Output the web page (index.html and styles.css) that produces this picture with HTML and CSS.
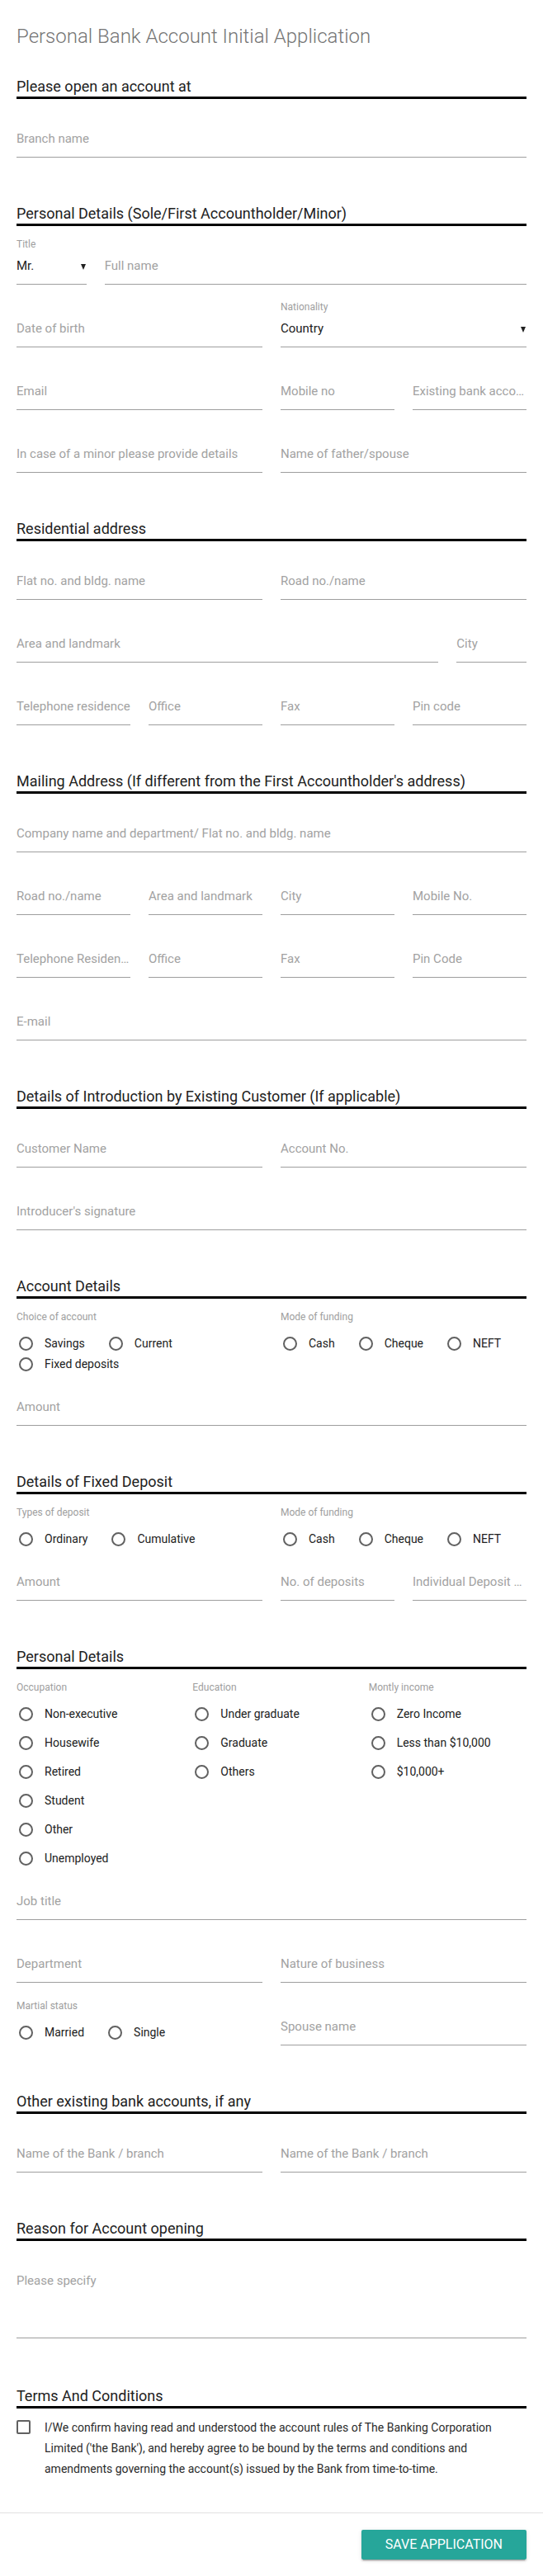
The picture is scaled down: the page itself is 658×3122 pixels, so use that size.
FILE: index.html
```html
<!DOCTYPE html>
<html lang="en">
<head>
<meta charset="utf-8">
<title>Personal Bank Account Initial Application</title>
<link rel="stylesheet" href="styles.css">
</head>
<body>
<main class="card">
  <div class="content">
    <h1 class="page-title">Personal Bank Account Initial Application</h1>

    <section class="section first">
      <h2 class="section-title">Please open an account at</h2>
      <div class="rows">
        <div class="row">
          <div class="field c12"><div class="input"><span class="ph">Branch name</span></div></div>
        </div>
      </div>
    </section>

    <section class="section">
      <h2 class="section-title">Personal Details (Sole/First Accountholder/Minor)</h2>
      <div class="rows">
        <div class="row">
          <div class="field c2">
            <span class="flabel">Title</span>
            <div class="input select"><span class="val">Mr.</span><span class="arrow"></span></div>
          </div>
          <div class="field c10"><div class="input"><span class="ph">Full name</span></div></div>
        </div>
        <div class="row">
          <div class="field c6"><div class="input"><span class="ph">Date of birth</span></div></div>
          <div class="field c6">
            <span class="flabel">Nationality</span>
            <div class="input select"><span class="val">Country</span><span class="arrow"></span></div>
          </div>
        </div>
        <div class="row">
          <div class="field c6"><div class="input"><span class="ph">Email</span></div></div>
          <div class="field c3"><div class="input"><span class="ph">Mobile no</span></div></div>
          <div class="field c3"><div class="input"><span class="ph trunc">Existing bank account no.</span></div></div>
        </div>
        <div class="row">
          <div class="field c6"><div class="input"><span class="ph">In case of a minor please provide details</span></div></div>
          <div class="field c6"><div class="input"><span class="ph">Name of father/spouse</span></div></div>
        </div>
      </div>
    </section>

    <section class="section">
      <h2 class="section-title">Residential address</h2>
      <div class="rows">
        <div class="row">
          <div class="field c6"><div class="input"><span class="ph">Flat no. and bldg. name</span></div></div>
          <div class="field c6"><div class="input"><span class="ph">Road no./name</span></div></div>
        </div>
        <div class="row">
          <div class="field c10"><div class="input"><span class="ph">Area and landmark</span></div></div>
          <div class="field c2"><div class="input"><span class="ph">City</span></div></div>
        </div>
        <div class="row">
          <div class="field c3"><div class="input"><span class="ph">Telephone residence</span></div></div>
          <div class="field c3"><div class="input"><span class="ph">Office</span></div></div>
          <div class="field c3"><div class="input"><span class="ph">Fax</span></div></div>
          <div class="field c3"><div class="input"><span class="ph">Pin code</span></div></div>
        </div>
      </div>
    </section>

    <section class="section">
      <h2 class="section-title">Mailing Address (If different from the First Accountholder's address)</h2>
      <div class="rows">
        <div class="row">
          <div class="field c12"><div class="input"><span class="ph">Company name and department/ Flat no. and bldg. name</span></div></div>
        </div>
        <div class="row">
          <div class="field c3"><div class="input"><span class="ph">Road no./name</span></div></div>
          <div class="field c3"><div class="input"><span class="ph">Area and landmark</span></div></div>
          <div class="field c3"><div class="input"><span class="ph">City</span></div></div>
          <div class="field c3"><div class="input"><span class="ph">Mobile No.</span></div></div>
        </div>
        <div class="row">
          <div class="field c3"><div class="input"><span class="ph trunc">Telephone Residence</span></div></div>
          <div class="field c3"><div class="input"><span class="ph">Office</span></div></div>
          <div class="field c3"><div class="input"><span class="ph">Fax</span></div></div>
          <div class="field c3"><div class="input"><span class="ph">Pin Code</span></div></div>
        </div>
        <div class="row">
          <div class="field c12"><div class="input"><span class="ph">E-mail</span></div></div>
        </div>
      </div>
    </section>

    <section class="section">
      <h2 class="section-title">Details of Introduction by Existing Customer (If applicable)</h2>
      <div class="rows">
        <div class="row">
          <div class="field c6"><div class="input"><span class="ph">Customer Name</span></div></div>
          <div class="field c6"><div class="input"><span class="ph">Account No.</span></div></div>
        </div>
        <div class="row">
          <div class="field c12"><div class="input"><span class="ph">Introducer's signature</span></div></div>
        </div>
      </div>
    </section>

    <section class="section">
      <h2 class="section-title">Account Details</h2>
      <div class="rows">
        <div class="row radio-row">
          <div class="rgroup c6">
            <span class="flabel">Choice of account</span>
            <div class="options">
              <span class="opt"><span class="radio"></span>Savings</span>
              <span class="opt"><span class="radio"></span>Current</span>
              <span class="opt"><span class="radio"></span>Fixed deposits</span>
            </div>
          </div>
          <div class="rgroup c6">
            <span class="flabel">Mode of funding</span>
            <div class="options">
              <span class="opt"><span class="radio"></span>Cash</span>
              <span class="opt"><span class="radio"></span>Cheque</span>
              <span class="opt"><span class="radio"></span>NEFT</span>
            </div>
          </div>
        </div>
        <div class="row">
          <div class="field c12"><div class="input"><span class="ph">Amount</span></div></div>
        </div>
      </div>
    </section>

    <section class="section">
      <h2 class="section-title">Details of Fixed Deposit</h2>
      <div class="rows">
        <div class="row radio-row">
          <div class="rgroup c6">
            <span class="flabel">Types of deposit</span>
            <div class="options">
              <span class="opt"><span class="radio"></span>Ordinary</span>
              <span class="opt"><span class="radio"></span>Cumulative</span>
            </div>
          </div>
          <div class="rgroup c6">
            <span class="flabel">Mode of funding</span>
            <div class="options">
              <span class="opt"><span class="radio"></span>Cash</span>
              <span class="opt"><span class="radio"></span>Cheque</span>
              <span class="opt"><span class="radio"></span>NEFT</span>
            </div>
          </div>
        </div>
        <div class="row">
          <div class="field c6"><div class="input"><span class="ph">Amount</span></div></div>
          <div class="field c3"><div class="input"><span class="ph">No. of deposits</span></div></div>
          <div class="field c3"><div class="input"><span class="ph trunc">Individual Deposit Amount</span></div></div>
        </div>
      </div>
    </section>

    <section class="section">
      <h2 class="section-title">Personal Details</h2>
      <div class="rows">
        <div class="row radio-row">
          <div class="rgroup c4">
            <span class="flabel">Occupation</span>
            <div class="options vertical">
              <span class="opt"><span class="radio"></span>Non-executive</span>
              <span class="opt"><span class="radio"></span>Housewife</span>
              <span class="opt"><span class="radio"></span>Retired</span>
              <span class="opt"><span class="radio"></span>Student</span>
              <span class="opt"><span class="radio"></span>Other</span>
              <span class="opt"><span class="radio"></span>Unemployed</span>
            </div>
          </div>
          <div class="rgroup c4">
            <span class="flabel">Education</span>
            <div class="options vertical">
              <span class="opt"><span class="radio"></span>Under graduate</span>
              <span class="opt"><span class="radio"></span>Graduate</span>
              <span class="opt"><span class="radio"></span>Others</span>
            </div>
          </div>
          <div class="rgroup c4">
            <span class="flabel">Montly income</span>
            <div class="options vertical">
              <span class="opt"><span class="radio"></span>Zero Income</span>
              <span class="opt"><span class="radio"></span>Less than $10,000</span>
              <span class="opt"><span class="radio"></span>$10,000+</span>
            </div>
          </div>
        </div>
        <div class="row">
          <div class="field c12"><div class="input"><span class="ph">Job title</span></div></div>
        </div>
        <div class="row">
          <div class="field c6"><div class="input"><span class="ph">Department</span></div></div>
          <div class="field c6"><div class="input"><span class="ph">Nature of business</span></div></div>
        </div>
        <div class="row">
          <div class="rgroup c6 inline-group">
            <span class="flabel">Martial status</span>
            <div class="options">
              <span class="opt"><span class="radio"></span>Married</span>
              <span class="opt"><span class="radio"></span>Single</span>
            </div>
          </div>
          <div class="field c6"><div class="input"><span class="ph">Spouse name</span></div></div>
        </div>
      </div>
    </section>

    <section class="section">
      <h2 class="section-title">Other existing bank accounts, if any</h2>
      <div class="rows">
        <div class="row">
          <div class="field c6"><div class="input"><span class="ph">Name of the Bank / branch</span></div></div>
          <div class="field c6"><div class="input"><span class="ph">Name of the Bank / branch</span></div></div>
        </div>
      </div>
    </section>

    <section class="section">
      <h2 class="section-title">Reason for Account opening</h2>
      <div class="rows">
        <div class="row">
          <div class="field c12"><div class="input tall"><span class="ph">Please specify</span></div></div>
        </div>
      </div>
    </section>

    <section class="section terms-section">
      <h2 class="section-title">Terms And Conditions</h2>
      <div class="terms">
        <span class="checkbox"></span>
        <p class="terms-text">I/We confirm having read and understood the account rules of The Banking Corporation Limited ('the Bank'), and hereby agree to be bound by the terms and conditions and amendments governing the account(s) issued by the Bank from time-to-time.</p>
      </div>
    </section>
  </div>

  <div class="actions">
    <button class="btn" type="button">Save Application</button>
  </div>
</main>
</body>
</html>
```

FILE: styles.css
```css
* {
  box-sizing: border-box;
}

html,
body {
  margin: 0;
  padding: 0;
}

body {
  font-family: Roboto, "Noto Sans", "Liberation Sans", sans-serif;
  background: #ffffff;
  color: #212121;
}

.card {
  background: #ffffff;
  border-bottom: 1px solid #cfcfcf;
}

.content {
  padding: 28px 20px 0;
}

.page-title {
  margin: 0;
  font-size: 24px;
  line-height: 32px;
  font-weight: 300;
  color: #757575;
}

.section {
  margin-top: 56px;
}

.section.first {
  margin-top: 33px;
}

.section.terms-section {
  margin-top: 58px;
}

.section-title {
  margin: 0;
  font-size: 18px;
  line-height: 24px;
  font-weight: 400;
  color: #212121;
  border-bottom: 3px solid #000000;
}

.rows {
  display: flex;
  flex-direction: column;
}

.row {
  display: grid;
  grid-template-columns: repeat(12, minmax(0, 1fr));
  column-gap: 22px;
  align-items: end;
  margin-top: 43px;
}

.row:first-child {
  margin-top: 38px;
}

.radio-row {
  align-items: start;
}

.radio-row:first-child {
  margin-top: 14px;
}

.radio-row + .row {
  margin-top: 29px;
}

.c2 { grid-column: span 2; }
.c3 { grid-column: span 3; }
.c4 { grid-column: span 4; }
.c6 { grid-column: span 6; }
.c10 { grid-column: span 10; }
.c12 { grid-column: span 12; }

.field {
  display: flex;
  flex-direction: column;
  min-width: 0;
}

.flabel {
  display: block;
  font-size: 12px;
  line-height: 16px;
  color: #9e9e9e;
  white-space: nowrap;
}

/* floating label sits in the gap above the field, not adding to its height */
.field .flabel {
  margin-top: -24px;
  margin-bottom: 8px;
}

.input {
  display: flex;
  font-size: 15px;
  line-height: 20px;
  padding-bottom: 12px;
  border-bottom: 1px solid #9e9e9e;
  white-space: nowrap;
  min-width: 0;
}

.input.tall {
  height: 80px;
}

.ph {
  color: #a2a2a2;
}

.ph.trunc {
  overflow: hidden;
  text-overflow: ellipsis;
  min-width: 0;
}

.val {
  color: #212121;
}

.arrow {
  flex: none;
  margin-left: auto;
  margin-right: 1px;
  margin-top: 8px;
  width: 0;
  height: 0;
  border-left: 3.5px solid transparent;
  border-right: 3.5px solid transparent;
  border-top: 7px solid #212121;
}

.rgroup {
  display: flex;
  flex-direction: column;
  min-width: 0;
}

.rgroup .flabel {
  margin-bottom: 12px;
}

/* radio group sharing a row with a text field: extends into the gap above */
.inline-group {
  margin-top: -23px;
  margin-bottom: 3px;
}

.options {
  display: flex;
  flex-wrap: wrap;
}

.options.vertical {
  flex-direction: column;
  flex-wrap: nowrap;
  gap: 10px;
}

.opt {
  display: inline-flex;
  align-items: center;
  height: 25px;
  font-size: 14px;
  line-height: 25px;
  color: #212121;
  margin-right: 26px;
  white-space: nowrap;
}

.options.vertical .opt {
  margin-right: 0;
}

.radio {
  flex: none;
  width: 17px;
  height: 17px;
  border: 2px solid #616161;
  border-radius: 50%;
  margin: 0 14px 0 3px;
}

.terms {
  display: flex;
  align-items: flex-start;
  margin-top: 11px;
}

.checkbox {
  flex: none;
  width: 17px;
  height: 17px;
  border: 2px solid #616161;
  border-radius: 2px;
  margin: 3px 17px 0 0;
}

.terms-text {
  margin: 0;
  font-size: 14px;
  line-height: 25px;
  color: #2b2b2b;
}

.actions {
  margin-top: 40px;
  border-top: 1px solid #e0e0e0;
  padding: 20px;
  display: flex;
  justify-content: flex-end;
}

.btn {
  font-family: inherit;
  font-size: 16px;
  font-weight: 400;
  line-height: 36px;
  height: 36px;
  padding: 0 29px;
  border: 0;
  border-radius: 2px;
  background: #26a69a;
  color: #ffffff;
  text-transform: uppercase;
  box-shadow: 0 2px 2px 0 rgba(0, 0, 0, 0.14), 0 3px 1px -2px rgba(0, 0, 0, 0.2), 0 1px 5px 0 rgba(0, 0, 0, 0.12);
  cursor: pointer;
}
```
